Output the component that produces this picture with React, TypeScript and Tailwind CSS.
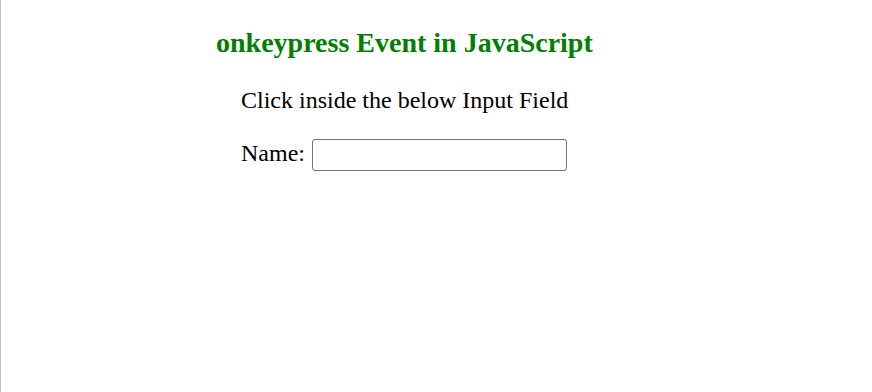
import React from "react";

export default function App() {
    return (
        <div className="min-h-[392px] w-full bg-white border-l border-[#c4c4c4] font-['Liberation_Serif',_'Times_New_Roman',_serif] text-black">
            <h1 className="pl-[215px] pt-[27px] text-[28px] leading-[32px] font-bold text-[#008000]">
                onkeypress Event in JavaScript
            </h1>

            <div className="pl-[240px]">
                <p className="mt-[27px] text-[24px] leading-[28px]">Click inside the below Input Field</p>

                <div className="mt-[25px] flex items-start gap-[7px]">
                    <label htmlFor="name" className="text-[24px] leading-[28px]">Name:</label>
                    <input
                        id="name"
                        type="text"
                        className="h-[32px] w-[255px] rounded-[3px] border border-[#767676] bg-white px-1 text-[16px] outline-none"
                    />
                </div>
            </div>
        </div>
    );
}
